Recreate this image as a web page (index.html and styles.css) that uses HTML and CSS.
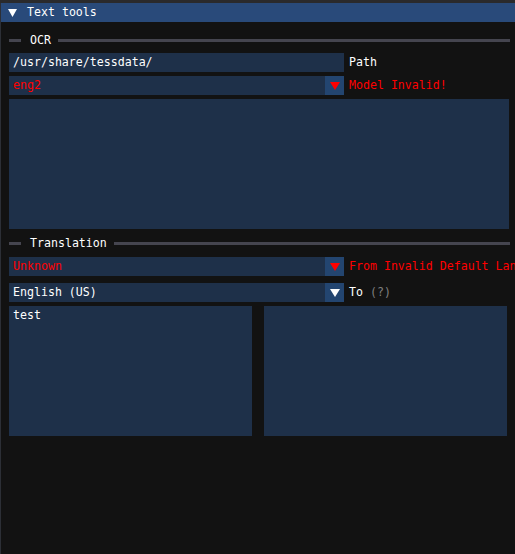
FILE: index.html
```html
<!DOCTYPE html>
<html>
<head>
<meta charset="utf-8">
<link rel="stylesheet" href="styles.css">
</head>
<body>
<div class="topstrip"></div>
<div class="window">
  <div class="titlebar">
    <svg class="tri" width="9" height="8" viewBox="0 0 9 8"><polygon points="0,0 9,0 4.5,8" fill="#ffffff"/></svg>
    <span class="title">Text tools</span>
  </div>
  <div class="content">
    <div class="sep sep-ocr">
      <span class="sep-lead"></span>
      <span class="sep-text">OCR</span>
      <span class="sep-line"></span>
    </div>
    <div class="row">
      <div class="frame input">/usr/share/tessdata/</div>
      <span class="label">Path</span>
    </div>
    <div class="row gap4">
      <div class="frame combo">
        <span class="combo-text red">eng2</span>
        <span class="arrow"><svg width="10" height="8" viewBox="0 0 10 8"><polygon points="0,0 10,0 5,8" fill="#ff0000"/></svg></span>
      </div>
      <span class="label red">Model Invalid!</span>
    </div>
    <div class="frame multi big gap4"></div>

    <div class="sep sep-tr">
      <span class="sep-lead"></span>
      <span class="sep-text">Translation</span>
      <span class="sep-line"></span>
    </div>
    <div class="row">
      <div class="frame combo">
        <span class="combo-text red">Unknown</span>
        <span class="arrow"><svg width="10" height="8" viewBox="0 0 10 8"><polygon points="0,0 10,0 5,8" fill="#ff0000"/></svg></span>
      </div>
      <span class="label red nowrap">From Invalid Default Language</span>
    </div>
    <div class="row gap7">
      <div class="frame combo">
        <span class="combo-text">English (US)</span>
        <span class="arrow"><svg width="10" height="8" viewBox="0 0 10 8"><polygon points="0,0 10,0 5,8" fill="#ffffff"/></svg></span>
      </div>
      <span class="label">To <span class="muted">(?)</span></span>
    </div>
    <div class="pair gap4">
      <div class="frame multi half">test</div>
      <div class="frame multi half"></div>
    </div>
  </div>
</div>
</body>
</html>
```
FILE: styles.css
```css
html, body {
  margin: 0;
  padding: 0;
  background: #121212;
  overflow: hidden;
}
body {
  width: 515px;
  height: 554px;
  font-family: "DejaVu Sans Mono", "Liberation Mono", monospace;
  font-size: 11.6px;
  color: #ffffff;
}
.topstrip {
  height: 3px;
  background: #2a2a2c;
}
.window {
  border-left: 1px solid #2c2f36;
  height: 551px;
  box-sizing: border-box;
}
.titlebar {
  height: 19px;
  background: #294a7a;
  display: flex;
  align-items: center;
  padding-left: 7px;
}
.tri {
  display: block;
  margin-top: 1px;
}
.title {
  margin-left: 10px;
  line-height: 19px;
}
.content {
  width: 500px;
  padding: 0 0 0 8px;
}
.sep {
  display: flex;
  align-items: center;
  width: 501px;
}
.sep-ocr {
  height: 19px;
  margin-top: 9px;
  margin-bottom: 3px;
}
.sep-tr {
  height: 21px;
  margin-top: 4px;
  margin-bottom: 3px;
}
.sep-lead {
  width: 12px;
  height: 3px;
  background: #45454f;
}
.sep-text {
  margin-left: 9px;
  margin-right: 7px;
  line-height: 19px;
}
.sep-line {
  flex: 1;
  height: 3px;
  background: #45454f;
}
.row {
  display: flex;
  align-items: center;
  height: 19px;
}
.gap4 { margin-top: 4px; }
.gap7 { margin-top: 7px; }
.frame {
  background: #1e3049;
  box-sizing: border-box;
}
.input, .combo {
  width: 335px;
  height: 19px;
  line-height: 19px;
  padding-left: 4px;
  flex: none;
}
.combo {
  display: flex;
  padding-left: 0;
}
.combo-text {
  flex: 1;
  padding-left: 4px;
}
.arrow {
  width: 19px;
  height: 19px;
  background: #234570;
  display: flex;
  align-items: center;
  justify-content: center;
}
.arrow svg { display: block; }
.label {
  margin-left: 5px;
  line-height: 19px;
}
.nowrap { white-space: nowrap; }
.red { color: #ff0000; }
.muted { color: #808080; }
.multi {
  padding: 2px 4px;
  line-height: 15px;
}
.big {
  width: 500px;
  height: 130px;
}
.pair {
  display: flex;
  gap: 12px;
}
.half {
  width: 243px;
  height: 130px;
}
```
